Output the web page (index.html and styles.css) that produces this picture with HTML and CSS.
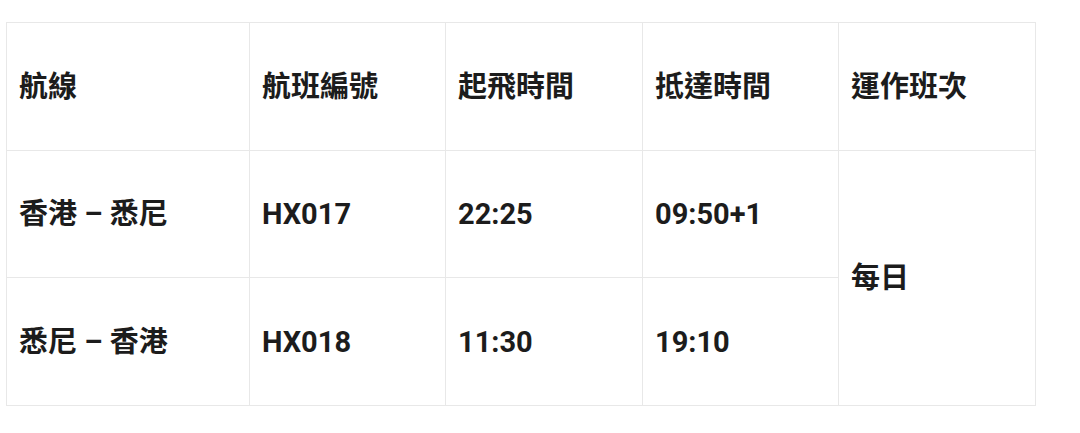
FILE: index.html
```html
<!DOCTYPE html>
<html lang="zh-Hant">
<head>
<meta charset="utf-8">
<link rel="stylesheet" href="styles.css">
</head>
<body>
<table class="flights">
  <colgroup>
    <col class="c1"><col class="c2"><col class="c3"><col class="c4"><col class="c5">
  </colgroup>
  <tr>
    <td>航線</td>
    <td>航班編號</td>
    <td>起飛時間</td>
    <td>抵達時間</td>
    <td>運作班次</td>
  </tr>
  <tr>
    <td>香港 – 悉尼</td>
    <td>HX017</td>
    <td>22:25</td>
    <td>09:50+1</td>
    <td rowspan="2">每日</td>
  </tr>
  <tr>
    <td>悉尼 – 香港</td>
    <td>HX018</td>
    <td>11:30</td>
    <td>19:10</td>
  </tr>
</table>
</body>
</html>
```
FILE: styles.css
```css
html, body {
  margin: 0;
  background: #fff;
}
body {
  padding: 22px 6px;
  font-family: Roboto, "Noto Sans CJK TC", sans-serif;
  font-weight: 700;
  font-size: 29px;
  line-height: 1.2;
  color: #1c1c1c;
}
.flights {
  border-collapse: collapse;
  table-layout: fixed;
  width: 1030px;
}
.c1 { width: 243px; }
.c2 { width: 196px; }
.c3 { width: 197px; }
.c4 { width: 196px; }
.c5 { width: 197px; }
.flights tr {
  height: 127.6px;
}
.flights td {
  border: 1px solid #e8e8e8;
  padding: 2px 12px 0;
  vertical-align: middle;
  text-align: left;
  white-space: nowrap;
}
```
